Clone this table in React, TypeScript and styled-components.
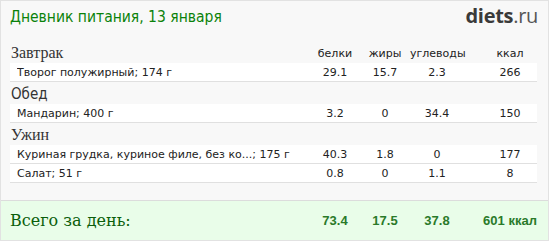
import React from 'react';
import styled, { createGlobalStyle } from 'styled-components';

const GlobalStyle = createGlobalStyle`
  body {
    margin: 0;
    background: #ffffff;
  }
`;

const Card = styled.div`
  width: 549px;
  height: 241px;
  box-sizing: border-box;
  border: 1px solid #e2e2e2;
  background: #f8f8f8;
  display: flex;
  flex-direction: column;
  font-family: 'DejaVu Sans', Verdana, sans-serif;
  color: #222;
`;

const Header = styled.div`
  height: 40px;
  padding: 0 10px 0 9px;
  display: flex;
  align-items: flex-start;
  justify-content: space-between;
`;

const Title = styled.h1`
  margin: 6px 0 0;
  font-family: 'DejaVu Sans Condensed', 'DejaVu Sans', sans-serif;
  font-size: 15.5px;
  font-weight: normal;
  color: #0a820a;
  line-height: 20px;
`;

const Logo = styled.div`
  margin-top: 4px;
  font-family: 'Open Sans', sans-serif;
  font-size: 20px;
  line-height: 22px;
  color: #3a3a3a;
  letter-spacing: -0.3px;

  b {
    font-weight: 700;
  }

  span {
    font-weight: 400;
    color: #555;
  }
`;

const Body = styled.div`
  padding: 0 11px 0 9px;
  flex: 1;
`;

const cols = '1fr 50px 50px 54px 73px';

const SectionHead = styled.div`
  display: grid;
  grid-template-columns: ${cols};
  height: 22px;
  align-items: end;
`;

const MealName = styled.div<{ $serif?: boolean }>`
  font-family: ${p =>
    p.$serif ? "'Liberation Serif', 'Times New Roman', serif" : "'DejaVu Sans Condensed', 'DejaVu Sans', sans-serif"};
  font-size: ${p => (p.$serif ? '16px' : '15px')};
  line-height: 20px;
  color: #333;
  padding-left: 1px;
`;

const Label = styled.div`
  font-size: 11px;
  line-height: 18px;
  text-align: center;
  color: #222;

  &:last-child {
    padding-left: 19px;
  }
`;

const Row = styled.div`
  display: grid;
  grid-template-columns: ${cols};
  height: 18px;
  align-items: center;
  padding-left: 7px;
  background: #ffffff;
  border-bottom: 1px solid #e0e0e0;
  font-size: 11px;
`;

const FoodName = styled.div`
  white-space: nowrap;
  overflow: hidden;
`;

const Num = styled.div`
  text-align: center;

  &:last-child {
    padding-left: 19px;
  }
`;

const Footer = styled.div`
  height: 39px;
  border-top: 1px solid #dcdcdc;
  background: #e9fde9;
  padding: 0 11px 0 9px;
`;

const TotalRow = styled.div`
  display: grid;
  grid-template-columns: ${cols};
  height: 39px;
  align-items: center;
`;

const TotalLabel = styled.div`
  font-family: 'DejaVu Serif', Georgia, serif;
  font-size: 16px;
  color: #0b5e0b;
`;

const TotalNum = styled.div`
  font-family: 'Liberation Sans', Arial, sans-serif;
  font-weight: bold;
  font-size: 13px;
  color: #2a7a2a;
  text-align: center;

  &:last-child {
    padding-left: 19px;
  }
`;

type Food = { name: string; p: string; f: string; c: string; kcal: string };

const meals: { title: string; serif: boolean; foods: Food[] }[] = [
  {
    title: 'Завтрак',
    serif: true,
    foods: [{ name: 'Творог полужирный; 174 г', p: '29.1', f: '15.7', c: '2.3', kcal: '266' }],
  },
  {
    title: 'Обед',
    serif: false,
    foods: [{ name: 'Мандарин; 400 г', p: '3.2', f: '0', c: '34.4', kcal: '150' }],
  },
  {
    title: 'Ужин',
    serif: true,
    foods: [
      { name: 'Куриная грудка, куриное филе, без ко...; 175 г', p: '40.3', f: '1.8', c: '0', kcal: '177' },
      { name: 'Салат; 51 г', p: '0.8', f: '0', c: '1.1', kcal: '8' },
    ],
  },
];

const App: React.FC = () => {
  return (
    <>
      <GlobalStyle />
      <Card>
        <Header>
          <Title>Дневник питания, 13 января</Title>
          <Logo>
            <b>diets</b>
            <span>.ru</span>
          </Logo>
        </Header>
        <Body>
          {meals.map((meal, i) => (
            <div key={meal.title}>
              <SectionHead>
                <MealName $serif={meal.serif}>{meal.title}</MealName>
                {i === 0 && (
                  <>
                    <Label>белки</Label>
                    <Label>жиры</Label>
                    <Label>углеводы</Label>
                    <Label>ккал</Label>
                  </>
                )}
              </SectionHead>
              {meal.foods.map(f => (
                <Row key={f.name}>
                  <FoodName>{f.name}</FoodName>
                  <Num>{f.p}</Num>
                  <Num>{f.f}</Num>
                  <Num>{f.c}</Num>
                  <Num>{f.kcal}</Num>
                </Row>
              ))}
            </div>
          ))}
        </Body>
        <Footer>
          <TotalRow>
            <TotalLabel>Всего за день:</TotalLabel>
            <TotalNum>73.4</TotalNum>
            <TotalNum>17.5</TotalNum>
            <TotalNum>37.8</TotalNum>
            <TotalNum>601 ккал</TotalNum>
          </TotalRow>
        </Footer>
      </Card>
    </>
  );
};

export default App;
